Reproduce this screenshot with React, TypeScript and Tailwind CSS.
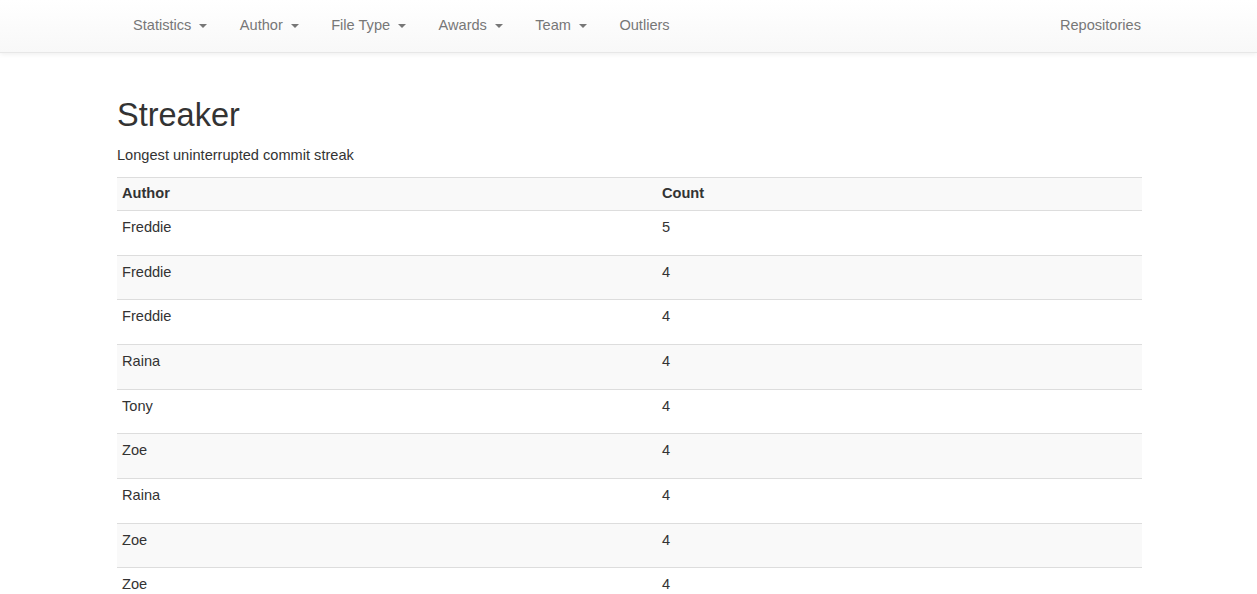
import React from "react";

const navItems = [
  { label: "Statistics", caret: true },
  { label: "Author", caret: true },
  { label: "File Type", caret: true },
  { label: "Awards", caret: true },
  { label: "Team", caret: true },
  { label: "Outliers", caret: false },
];

const rows = [
  { author: "Freddie", count: 5 },
  { author: "Freddie", count: 4 },
  { author: "Freddie", count: 4 },
  { author: "Raina", count: 4 },
  { author: "Tony", count: 4 },
  { author: "Zoe", count: 4 },
  { author: "Raina", count: 4 },
  { author: "Zoe", count: 4 },
  { author: "Zoe", count: 4 },
  { author: "Tony", count: 4 },
];

const Caret = () => (
  <span className="ml-[8px] inline-block h-0 w-0 border-x-[4px] border-t-[4px] border-x-transparent border-t-[#777] align-middle" />
);

export default function App() {
  return (
    <div className="h-[594px] overflow-hidden bg-white font-['Liberation_Sans',Arial,sans-serif] text-[14.6px] leading-[20px] text-[#333]">
      <nav className="h-[53px] border-b border-[#e7e7e7] bg-gradient-to-b from-white to-[#f8f8f8] shadow-[0_1px_5px_rgba(0,0,0,0.075)]">
        <div className="ml-[118px] flex w-[1038px] items-center justify-between">
          <ul className="flex">
            {navItems.map((item) => (
              <li key={item.label} className="py-[15px] pl-[15px] pr-[17.4px] text-[#777]">
                {item.label}
                {item.caret && <Caret />}
              </li>
            ))}
          </ul>
          <ul className="flex">
            <li className="px-[15px] py-[15px] text-[#777]">Repositories</li>
          </ul>
        </div>
      </nav>

      <main className="ml-[117px] w-[1025px] pt-[44px]">
        <h1 className="mb-[12px] text-[32.5px] font-medium leading-[36px] text-[#333]">Streaker</h1>
        <p className="mb-[12px]">Longest uninterrupted commit streak</p>
        <table className="w-full border-collapse">
          <thead>
            <tr className="bg-[#f9f9f9]">
              <th className="w-[540px] border-y border-[#ddd] px-[5px] pt-[5px] pb-[7px] text-left font-bold">Author</th>
              <th className="border-y border-[#ddd] px-[5px] pt-[5px] pb-[7px] text-left font-bold">Count</th>
            </tr>
          </thead>
          <tbody>
            {rows.map((r, i) => (
              <tr key={i} className={`h-[44.67px] ${i % 2 === 1 ? "bg-[#f9f9f9]" : "bg-white"}`}>
                <td className="border-b border-[#ddd] px-[5px] pt-[6px] align-top">{r.author}</td>
                <td className="border-b border-[#ddd] px-[5px] pt-[6px] align-top">{r.count}</td>
              </tr>
            ))}
          </tbody>
        </table>
      </main>
    </div>
  );
}
